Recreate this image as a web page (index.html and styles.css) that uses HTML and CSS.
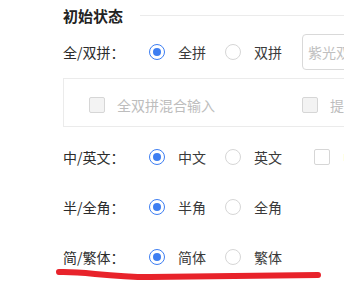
FILE: index.html
```html
<!DOCTYPE html>
<html>
<head lang="zh">
    <meta charset="UTF-8">
    <title>初始状态</title>
    <link rel="stylesheet" href="styles.css">
</head>
<body>
<div class="container">
    <div class="title">初始状态</div>

    <div class="row first">
        <span class="label">全/双拼：</span>
        <span class="radio checked"></span><span class="opt">全拼</span>
        <span class="radio"></span><span class="opt">双拼</span>
        <span class="select">紫光双拼</span>
    </div>

    <div class="box">
        <span class="check disabled"></span><span class="opt dim wide">全双拼混合输入</span>
        <span class="check disabled"></span><span class="opt dim">提示</span>
    </div>

    <div class="row">
        <span class="label">中/英文：</span>
        <span class="radio checked"></span><span class="opt">中文</span>
        <span class="radio"></span><span class="opt">英文</span>
        <span class="check"></span><span class="opt">中文标点</span>
    </div>

    <div class="row">
        <span class="label">半/全角：</span>
        <span class="radio checked"></span><span class="opt">半角</span>
        <span class="radio"></span><span class="opt">全角</span>
    </div>

    <div class="row">
        <span class="label">简/繁体：</span>
        <span class="radio checked"></span><span class="opt">简体</span>
        <span class="radio"></span><span class="opt">繁体</span>
    </div>

    <!-- 手画的红线标注 -->
    <svg class="mark" width="344" height="288" viewBox="0 0 344 288">
        <path d="M59,272 C85,271 105,277 150,277 L318,275" fill="none" stroke="#e8232b" stroke-width="6" stroke-linecap="round"/>
    </svg>
</div>
</body>
</html>
```

FILE: styles.css
```css
html, body, div {
    padding: 0;
    margin: 0;
    border: none;
}

body {
    background: #fff;
    font-family: "Noto Sans CJK SC", "Noto Sans", sans-serif;
    color: #333;
    overflow: hidden;
}

.container {
    position: relative;
    width: 344px;
    height: 288px;
    padding-left: 63px;
    box-sizing: border-box;
    overflow: hidden;
}

.title {
    display: flex;
    align-items: center;
    height: 30px;
    font-size: 15px;
    font-weight: bold;
    color: #222;
    white-space: nowrap;
}

.title::after {
    content: "";
    flex: 1;
    margin-left: 17px;
    border-top: 1px solid #ebebeb;
}

.row {
    display: flex;
    align-items: center;
    height: 50px;
    font-size: 14px;
    white-space: nowrap;
}

.row.first {
    height: 36px;
    margin-top: 4px;
}

.label {
    width: 86px;
    flex: none;
    color: #2b2b2b;
}

.opt {
    color: #3a3a3a;
    margin-left: 13px;
    margin-right: 19px;
    flex: none;
}

.opt.dim {
    color: #bdbdbd;
    margin-left: 12px;
}

.opt.wide {
    width: 98px;
    margin-right: 87px;
}

.radio {
    flex: none;
    width: 16px;
    height: 16px;
    border: 1px solid #d6d6d6;
    border-radius: 50%;
    box-sizing: border-box;
    position: relative;
}

.radio.checked {
    border-color: #3d7ef2;
}

.radio.checked::after {
    content: "";
    position: absolute;
    left: 3px;
    top: 3px;
    width: 8px;
    height: 8px;
    border-radius: 50%;
    background: #3d7ef2;
}

.check {
    flex: none;
    width: 16px;
    height: 16px;
    border: 1px solid #d6d6d6;
    border-radius: 2px;
    box-sizing: border-box;
    margin-left: 13px;
}

.check.disabled {
    background: #f3f3f3;
    margin-left: 0;
}

.select {
    flex: none;
    height: 36px;
    width: 120px;
    margin-left: 1px;
    border: 1px solid #d9d9d9;
    border-radius: 4px;
    box-sizing: border-box;
    padding-left: 5px;
    line-height: 34px;
    color: #c0c0c0;
}

.box {
    display: flex;
    align-items: center;
    height: 49px;
    width: 320px;
    margin-top: 8px;
    margin-bottom: 5px;
    padding: 5px 0 0 25px;
    border: 1px solid #ebebeb;
    box-sizing: border-box;
    font-size: 14px;
    white-space: nowrap;
}

.mark {
    position: absolute;
    left: 0;
    top: 0;
}
```
